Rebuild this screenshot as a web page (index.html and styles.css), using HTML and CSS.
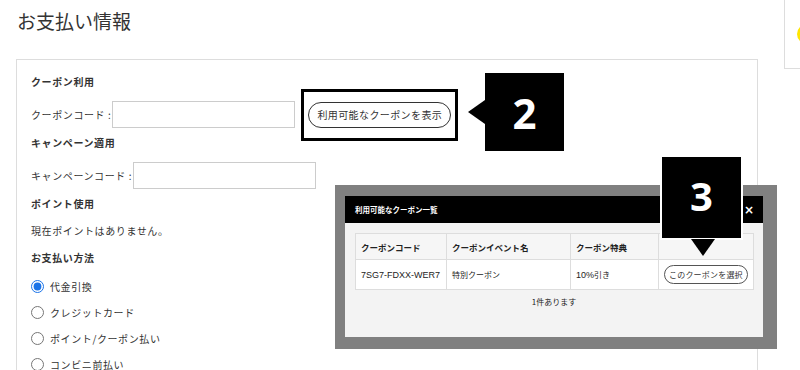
FILE: index.html
```html
<!DOCTYPE html>
<html lang="ja">
<head>
  <meta charset="UTF-8" />
  <meta name="viewport" content="width=device-width, initial-scale=1.0" />
  <title>お支払い情報</title>
  <link rel="stylesheet" href="styles.css">
</head>
<body>
  <div class="page">
    <div class="main">
      <h1>お支払い情報</h1>
      <div class="card">
        <div class="section-title">クーポン利用</div>
        <div class="field">
          <label>クーポンコード :</label>
          <input type="text" class="code-input" />
          <span class="highlight-box">
            <button class="pill-button">利用可能なクーポンを表示</button>
          </span>
        </div>

        <div class="section-title">キャンペーン適用</div>
        <div class="field">
          <label>キャンペーンコード :</label>
          <input type="text" class="code-input" />
        </div>

        <div class="section-title">ポイント使用</div>
        <p class="note">現在ポイントはありません。</p>

        <div class="section-title payment-title">お支払い方法</div>
        <div class="payment-list">
          <label class="radio-row"><input type="radio" name="pay" checked /> 代金引換</label>
          <label class="radio-row"><input type="radio" name="pay" /> クレジットカード</label>
          <label class="radio-row"><input type="radio" name="pay" /> ポイント/クーポン払い</label>
          <label class="radio-row"><input type="radio" name="pay" /> コンビニ前払い</label>
        </div>
      </div>
    </div>
    <div class="side-box">
      <span class="yellow-dot"></span>
    </div>
  </div>

  <!-- step callout 2 -->
  <div class="callout callout-left">2</div>

  <!-- coupon list modal -->
  <div class="overlay">
    <div class="modal">
      <div class="modal-header">
        <span>利用可能なクーポン一覧</span>
        <span class="close">×</span>
      </div>
      <div class="modal-body">
        <table class="coupon-table">
          <colgroup>
            <col class="col-code">
            <col class="col-event">
            <col class="col-benefit">
            <col class="col-action">
          </colgroup>
          <thead>
            <tr>
              <th>クーポンコード</th>
              <th>クーポンイベント名</th>
              <th>クーポン特典</th>
              <th></th>
            </tr>
          </thead>
          <tbody>
            <tr>
              <td class="latin">7SG7-FDXX-WER7</td>
              <td>特別クーポン</td>
              <td><span class="latin">10%</span>引き</td>
              <td><button class="pill-button small">このクーポンを選択</button></td>
            </tr>
          </tbody>
        </table>
        <p class="count">1件あります</p>
      </div>
    </div>
  </div>

  <!-- step callout 3 -->
  <div class="callout callout-down">3</div>
</body>
</html>
```

FILE: styles.css
```css
body {
  margin: 0;
  background-color: #fff;
  font-family: "Noto Sans CJK JP", "Noto Sans", sans-serif;
  color: #333;
  overflow: hidden;
}

.page {
  display: flex;
  align-items: flex-start;
  padding-left: 16px;
}

.main {
  width: 742px;
  flex-shrink: 0;
}

h1 {
  margin: 0;
  padding: 7px 0 0 1px;
  height: 59px;
  box-sizing: border-box;
  font-size: 19px;
  font-weight: normal;
  color: #333;
}

.card {
  border: 1px solid #ddd;
  padding: 12px 14px 40px;
  font-size: 10px;
  letter-spacing: 0.6px;
}

.section-title {
  font-weight: bold;
  line-height: 20px;
  margin-top: 5px;
}

.section-title:first-child {
  margin-top: 0;
}

.payment-title {
  margin-top: 7px;
}

.field {
  display: flex;
  align-items: center;
  margin-top: 9px;
}

.field label {
  margin-right: 1px;
}

.code-input {
  width: 183px;
  height: 27px;
  box-sizing: border-box;
  border: 1px solid #ccc;
  padding: 0 6px;
  margin: 0;
}

.highlight-box {
  display: inline-block;
  border: 3px solid #000;
  padding: 10px 4px;
  margin: -13px 0 -13px 6px;
  background-color: #fff;
}

.pill-button {
  display: block;
  height: 26px;
  padding: 0 8px;
  border: 1px solid #333;
  border-radius: 13px;
  background-color: #fff;
  font-family: inherit;
  font-size: 10px;
  letter-spacing: 0.4px;
  color: #333;
  white-space: nowrap;
}

.pill-button.small {
  height: 19px;
  padding: 0 4px;
  font-size: 8px;
  letter-spacing: 0.2px;
  border-radius: 10px;
  border-color: #555;
}

.note {
  margin: 7px 0 0;
  line-height: 20px;
}

.payment-list {
  margin-top: 5px;
}

.radio-row {
  display: flex;
  align-items: center;
  height: 26px;
}

.radio-row input {
  width: 13px;
  height: 13px;
  margin: 0 6px 0 0;
  accent-color: #1a73e8;
}

.side-box {
  width: 40px;
  height: 68px;
  margin-left: 26px;
  border: 1px solid #ddd;
  border-top: none;
  border-right: none;
  position: relative;
  flex-shrink: 0;
}

.yellow-dot {
  position: absolute;
  left: 12px;
  top: 24px;
  width: 20px;
  height: 20px;
  border-radius: 50%;
  background-color: #ffe600;
}

/* annotations */
.callout {
  position: absolute;
  background-color: #000;
  color: #fff;
  font-family: "Open Sans", "Noto Sans", sans-serif;
  font-weight: bold;
  font-size: 42px;
  display: flex;
  align-items: center;
  justify-content: center;
  box-sizing: border-box;
}

.callout-left {
  left: 485px;
  top: 73px;
  width: 79px;
  height: 78px;
}

.callout-left::before {
  content: "";
  position: absolute;
  left: -17px;
  top: 27px;
  border-right: 17px solid #000;
  border-top: 12px solid transparent;
  border-bottom: 12px solid transparent;
}

.callout-down {
  left: 660px;
  top: 157px;
  width: 83px;
  height: 83px;
  border: 2px solid #fff;
  border-top: none;
  font-size: 40px;
  padding-bottom: 4px;
}

.callout-down::after {
  content: "";
  position: absolute;
  left: 29px;
  bottom: -18px;
  border-top: 17px solid #000;
  border-left: 12px solid transparent;
  border-right: 12px solid transparent;
}

/* modal */
.overlay {
  position: absolute;
  left: 335px;
  top: 185px;
  width: 442px;
  height: 164px;
  background-color: #808080;
  padding: 11px 14px 0 10px;
  box-sizing: border-box;
}

.modal {
  height: 141px;
  background-color: #f3f3f3;
}

.modal-header {
  height: 27px;
  background-color: #000;
  color: #fff;
  font-size: 7.5px;
  font-weight: bold;
  display: flex;
  align-items: center;
  justify-content: space-between;
  padding: 0 9px 0 10px;
}

.close {
  font-size: 12px;
  font-family: "DejaVu Sans", sans-serif;
}

.modal-body {
  padding: 10px 10px 0;
}

.coupon-table {
  width: 398px;
  table-layout: fixed;
  border-collapse: collapse;
  font-size: 8px;
  color: #222;
}

.col-code {
  width: 91px;
}

.col-event {
  width: 124px;
}

.col-benefit {
  width: 88px;
}

.col-action {
  width: 95px;
}

.coupon-table th,
.coupon-table td {
  border: 1px solid #ddd;
  text-align: left;
  padding: 0 5px;
}

.coupon-table th {
  height: 25px;
  background-color: #f6f6f6;
  font-weight: bold;
  font-size: 8.5px;
}

.coupon-table td {
  height: 29px;
  background-color: #fff;
}

.latin {
  font-family: "Liberation Sans", sans-serif;
  font-size: 9px;
}

.count {
  margin: 6px 0 0;
  text-align: center;
  font-size: 8px;
  color: #222;
}
```
